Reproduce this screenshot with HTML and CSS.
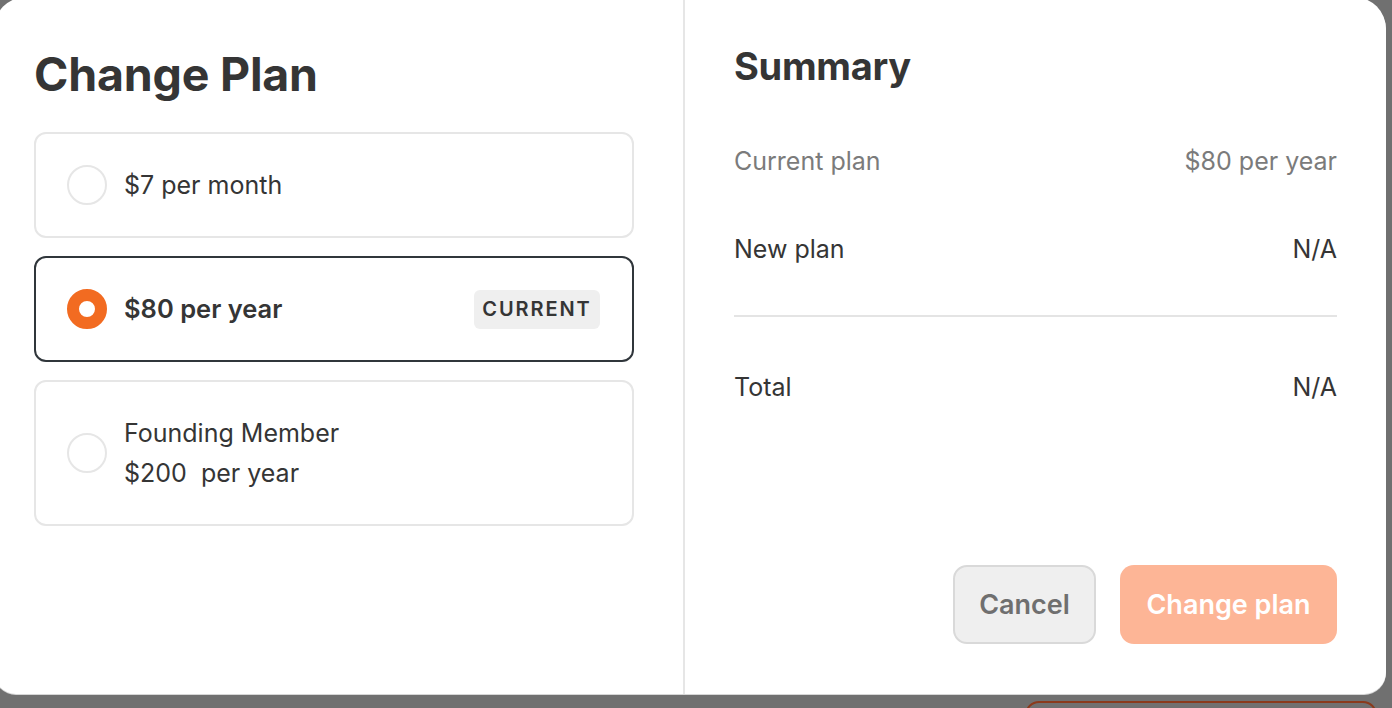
FILE: index.html
```html
<!DOCTYPE html>
<html>
<head>
<meta charset="utf-8">
<link rel="stylesheet" href="styles.css">
</head>
<body>
<div class="behind"></div>
<div class="modal">
  <section class="left">
    <h1 class="title">Change Plan</h1>
    <div class="plans">
      <div class="plan">
        <span class="radio"></span>
        <div class="plan-text"><div>$7 per month</div></div>
      </div>
      <div class="plan selected">
        <span class="radio on"></span>
        <div class="plan-text strong"><div>$80 per year</div></div>
        <span class="badge">CURRENT</span>
      </div>
      <div class="plan tall">
        <span class="radio"></span>
        <div class="plan-text"><div>Founding Member</div><div>$200&nbsp; per year</div></div>
      </div>
    </div>
  </section>
  <section class="right">
    <h2 class="summary-title">Summary</h2>
    <div class="row muted"><span>Current plan</span><span>$80 per year</span></div>
    <div class="row second"><span>New plan</span><span>N/A</span></div>
    <hr class="rule">
    <div class="row total"><span>Total</span><span>N/A</span></div>
    <div class="actions">
      <button class="btn cancel">Cancel</button>
      <button class="btn primary">Change plan</button>
    </div>
  </section>
</div>
</body>
</html>
```
FILE: styles.css
```css
html, body {
  margin: 0;
  padding: 0;
}
body {
  width: 1392px;
  height: 708px;
  overflow: hidden;
  background: #707070;
  font-family: Inter, "Noto Sans", "Liberation Sans", sans-serif;
  color: #353535;
  position: relative;
}
.behind {
  position: absolute;
  left: 1025px;
  top: 701px;
  width: 352px;
  height: 40px;
  border: 2px solid #8a3a1c;
  border-radius: 14px;
  box-sizing: border-box;
}
.modal {
  position: relative;
  margin-left: -6px;
  margin-top: -3px;
  width: 1392px;
  height: 697px;
  background: #fff;
  border-radius: 32px 32px 22px 22px;
  display: flex;
  box-shadow: 0 1px 0 #d6d6d6;
}
.left {
  width: 691px;
  box-sizing: border-box;
  border-right: 2px solid #e6e6e6;
  padding: 50px 0 0 40px;
}
.title {
  margin: 0;
  font-size: 46.5px;
  line-height: 54px;
  font-weight: 700;
  color: #353535;
  letter-spacing: -0.2px;
}
.plans {
  margin-top: 31px;
  display: flex;
  flex-direction: column;
  gap: 18px;
  width: 600px;
}
.plan {
  height: 106px;
  box-sizing: border-box;
  border: 2px solid #e6e6e6;
  border-radius: 12px;
  display: flex;
  align-items: center;
  padding: 0 32px 0 31px;
  gap: 17px;
}
.plan.tall {
  height: 146px;
}
.plan.selected {
  border-color: #30363b;
}
.radio {
  width: 40px;
  height: 40px;
  box-sizing: border-box;
  border: 2px solid #e6e6e6;
  border-radius: 50%;
  flex: none;
}
.radio.on {
  border: 12px solid #f26b21;
}
.plan-text {
  flex: 1;
  font-size: 25px;
  line-height: 40px;
  color: #353535;
}
.plan-text.strong {
  font-weight: 600;
  font-size: 25.5px;
}
.badge {
  background: #efefef;
  border-radius: 6px;
  height: 39px;
  width: 126px;
  display: flex;
  align-items: center;
  justify-content: center;
  font-size: 20px;
  font-weight: 600;
  letter-spacing: 1.9px;
  color: #353535;
}
.right {
  flex: 1;
  box-sizing: border-box;
  padding: 45px 49px 50px 49px;
  display: flex;
  flex-direction: column;
}
.summary-title {
  margin: 0;
  font-size: 38px;
  line-height: 48px;
  font-weight: 700;
  color: #353535;
  letter-spacing: -0.3px;
}
.row {
  display: flex;
  justify-content: space-between;
  font-size: 25px;
  line-height: 32px;
  color: #353535;
}
.row.muted {
  margin-top: 55px;
  color: #7b7b7b;
}
.row.second {
  margin-top: 56px;
}
.rule {
  margin: 50px 0 0;
  border: 0;
  height: 2px;
  background: #e4e4e4;
}
.row.total {
  margin-top: 54px;
}
.actions {
  margin-top: auto;
  display: flex;
  justify-content: flex-end;
  gap: 24px;
}
.btn {
  height: 79px;
  border-radius: 14px;
  font-family: Inter, "Noto Sans", "Liberation Sans", sans-serif;
  font-size: 27px;
  font-weight: 600;
  box-sizing: border-box;
  cursor: pointer;
  padding: 0;
}
.cancel {
  width: 143px;
  background: #efefef;
  border: 2px solid #d9d9d9;
  color: #6f6f6f;
}
.primary {
  width: 217px;
  background: #fdb596;
  border: 0;
  color: #fff;
}
```
